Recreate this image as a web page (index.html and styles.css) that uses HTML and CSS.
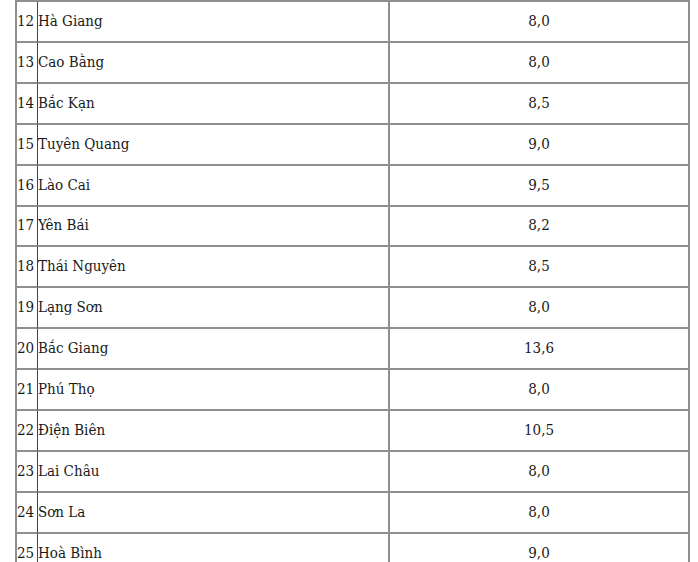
FILE: index.html
```html
<!DOCTYPE html>
<html lang="vi">
<head>
<meta charset="utf-8">
<link rel="stylesheet" href="styles.css">
</head>
<body>
<div class="wrap">
<table class="tbl">
<colgroup><col class="c-num"><col class="c-name"><col class="c-val"></colgroup>
<tbody>
<tr><td class="num">12</td><td class="name">Hà Giang</td><td class="val">8,0</td></tr>
<tr><td class="num">13</td><td class="name">Cao Bằng</td><td class="val">8,0</td></tr>
<tr><td class="num">14</td><td class="name">Bắc Kạn</td><td class="val">8,5</td></tr>
<tr><td class="num">15</td><td class="name">Tuyên Quang</td><td class="val">9,0</td></tr>
<tr><td class="num">16</td><td class="name">Lào Cai</td><td class="val">9,5</td></tr>
<tr><td class="num">17</td><td class="name">Yên Bái</td><td class="val">8,2</td></tr>
<tr><td class="num">18</td><td class="name">Thái Nguyên</td><td class="val">8,5</td></tr>
<tr><td class="num">19</td><td class="name">Lạng Sơn</td><td class="val">8,0</td></tr>
<tr><td class="num">20</td><td class="name">Bắc Giang</td><td class="val">13,6</td></tr>
<tr><td class="num">21</td><td class="name">Phú Thọ</td><td class="val">8,0</td></tr>
<tr><td class="num">22</td><td class="name">Điện Biên</td><td class="val">10,5</td></tr>
<tr><td class="num">23</td><td class="name">Lai Châu</td><td class="val">8,0</td></tr>
<tr><td class="num">24</td><td class="name">Sơn La</td><td class="val">8,0</td></tr>
<tr><td class="num">25</td><td class="name">Hoà Bình</td><td class="val">9,0</td></tr>
</tbody>
</table>
</div>
</body>
</html>
```
FILE: styles.css
```css
html, body {
  margin: 0;
  padding: 0;
  background: #fff;
  overflow: hidden;
}
.wrap {
  padding-left: 15px;
}
.tbl {
  border-collapse: separate;
  border-spacing: 0;
  table-layout: fixed;
  width: 675px;
  border-left: 2px solid #8f8f8f;
  border-top: 2px solid #8f8f8f;
  font-family: "DejaVu Serif Condensed", "DejaVu Serif", serif;
  font-stretch: condensed;
  font-size: 15px;
  color: #1a1a1a;
}
.c-num { width: 21px; }
.c-name { width: 352px; }
.c-val { width: 300px; }
.tbl td {
  height: 37.92px;
  padding: 0 0 1px 0;
  border-bottom: 2px solid #8f8f8f;
  vertical-align: middle;
  white-space: nowrap;
  box-sizing: content-box;
}
.tbl td.num {
  border-right: 1px solid #444;
  text-align: left;
}
.tbl td.name {
  border-right: 2px solid #8f8f8f;
}
.tbl td.val {
  border-right: 2px solid #8f8f8f;
  text-align: center;
}
```
